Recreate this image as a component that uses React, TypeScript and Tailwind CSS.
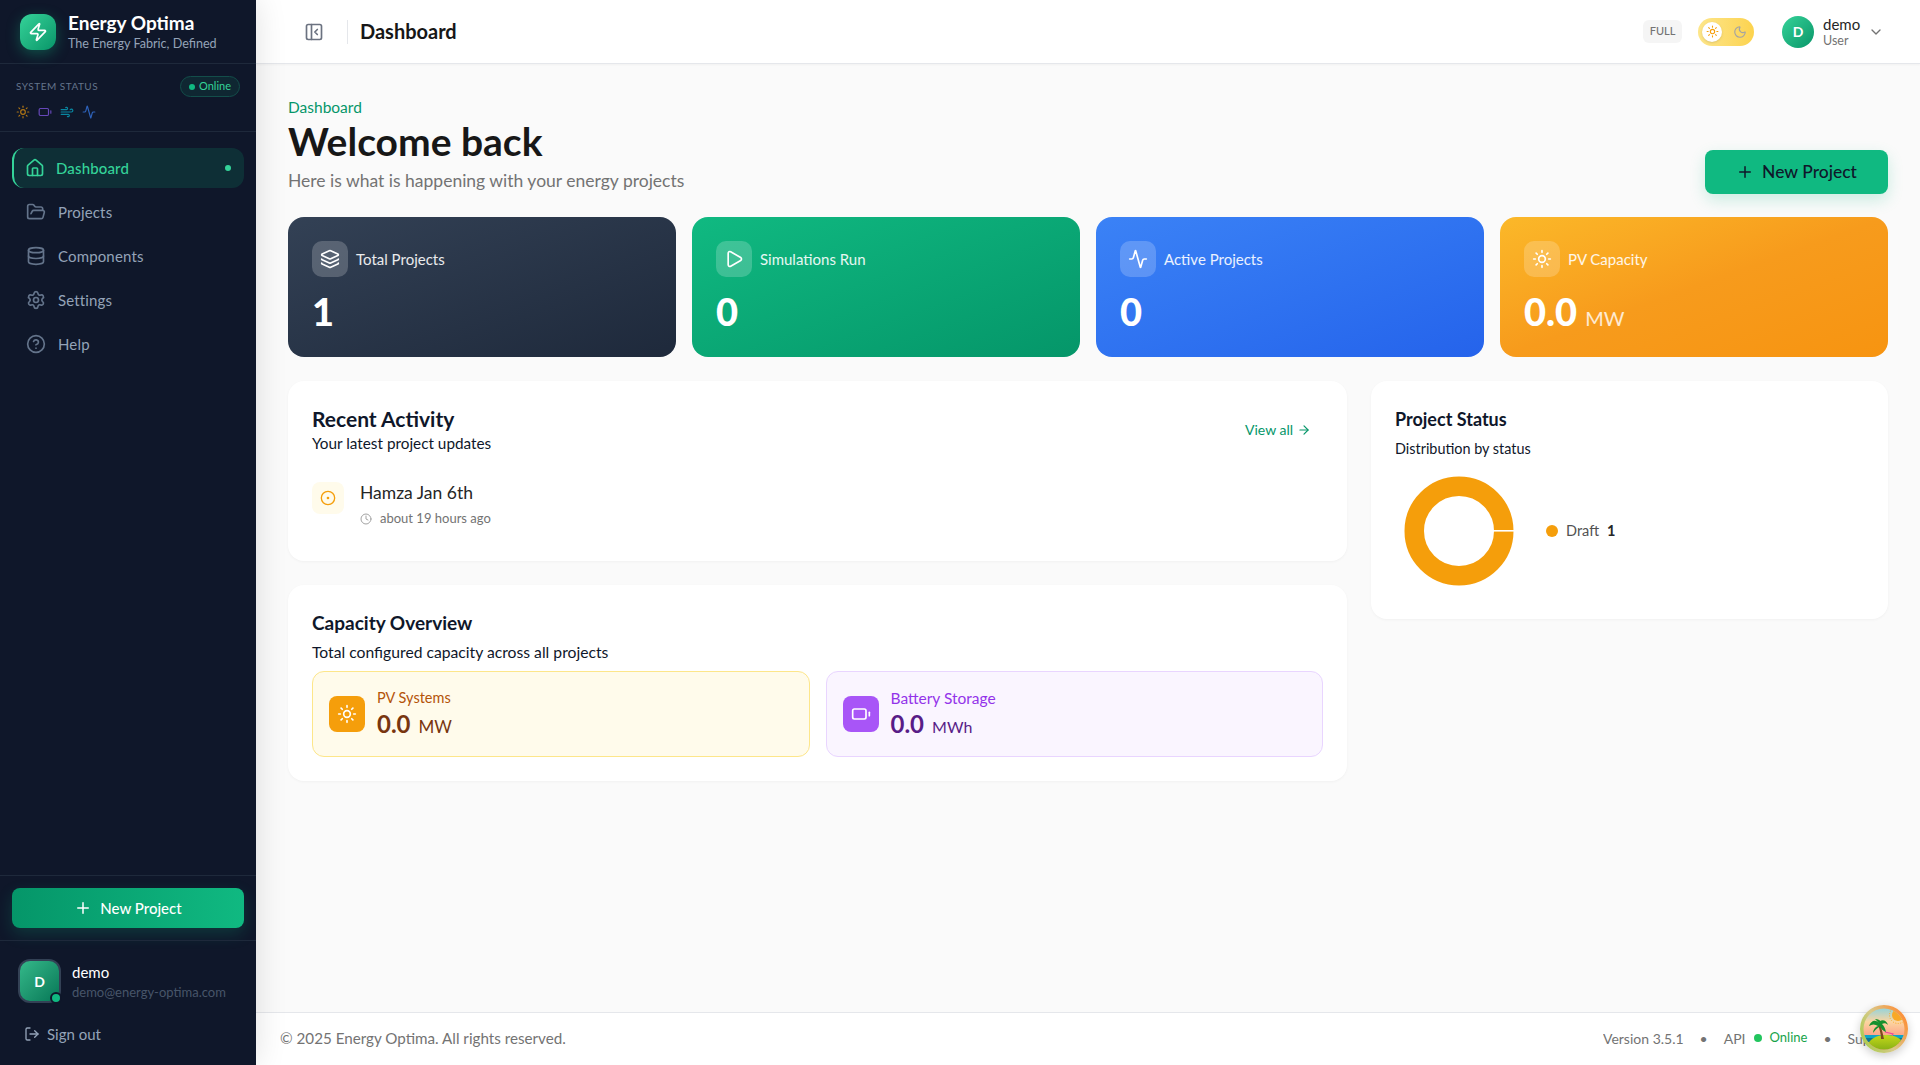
import {
  Activity,
  ArrowRight,
  Battery,
  CircleDot,
  CircleHelp,
  ChevronDown,
  Clock,
  Database,
  FolderOpen,
  House,
  Layers,
  LogOut,
  Moon,
  PanelLeftClose,
  Play,
  Plus,
  Settings,
  Sun,
  Wind,
  Zap,
} from "lucide-react";

const NAV = [
  { label: "Projects", icon: FolderOpen },
  { label: "Components", icon: Database },
  { label: "Settings", icon: Settings },
  { label: "Help", icon: CircleHelp },
];

function Sidebar() {
  return (
    <aside className="relative z-10 w-64 shrink-0 h-full flex flex-col bg-[#0f172a] shadow-[0_0_30px_rgba(0,0,0,0.12)]">
      {/* LOGO */}
      <div className="h-[64px] shrink-0 border-b border-[#1e293b] flex items-center gap-3 pl-5">
        <div className="w-9 h-9 rounded-xl bg-gradient-to-br from-[#34d399] to-[#059669] flex items-center justify-center shadow-[0_4px_14px_rgba(16,185,129,0.35)]">
          <Zap size={20} className="text-white" strokeWidth={2} />
        </div>
        <div>
          <div className="text-[19px] leading-[22px] font-bold text-white">Energy Optima</div>
          <div className="text-[12.6px] leading-4 text-[#94a3b8] mt-0.5">The Energy Fabric, Defined</div>
        </div>
      </div>

      {/* SYSTEM STATUS */}
      <div className="h-[68px] shrink-0 border-b border-[#1e293b] px-4 pt-3">
        <div className="flex items-center justify-between">
          <span className="text-[10px] tracking-[0.05em] text-[#64748b] uppercase">System Status</span>
          <span className="h-[21px] w-[60px] rounded-full border border-[#134e4a] bg-[#10b981]/10 flex items-center justify-center gap-1 text-[11px] text-[#34d399]">
            <span className="w-[6px] h-[6px] rounded-full bg-[#10b981]" />
            Online
          </span>
        </div>
        <div className="flex items-center gap-2 mt-2">
          <Sun size={14} className="text-[#f59e0b]/70" />
          <Battery size={14} className="text-[#8b5cf6]/70" />
          <Wind size={14} className="text-[#06b6d4]/70" />
          <Activity size={14} className="text-[#3b82f6]/70" />
        </div>
      </div>

      {/* NAV */}
      <nav className="flex-1 px-3 pt-[16px] flex flex-col gap-1">
        <a className="h-10 rounded-xl border-l-2 border-[#34d399] bg-[#10b981]/15 flex items-center pl-[11px] pr-[13px] text-[#34d399]">
          <House size={20} />
          <span className="ml-[11px] text-[15px] font-medium tracking-[0.01em]">Dashboard</span>
          <span className="ml-auto w-[6px] h-[6px] rounded-full bg-[#34d399]" />
        </a>
        {NAV.map((item) => (
          <a key={item.label} className="h-10 rounded-xl flex items-center pl-[14px] text-[#94a3b8]">
            <item.icon size={20} className="text-[#64748b]" />
            <span className="ml-[12px] text-[15px] tracking-[0.01em]">{item.label}</span>
          </a>
        ))}
      </nav>

      {/* NEW PROJECT */}
      <div className="h-[65px] shrink-0 border-t border-[#1e293b] px-3 pt-3">
        <button className="w-full h-10 rounded-lg bg-gradient-to-r from-[#059669] to-[#10b981] flex items-center justify-center gap-2 text-[15px] font-medium text-white shadow-[0_6px_16px_rgba(16,185,129,0.2)]">
          <Plus size={18} />
          New Project
        </button>
      </div>

      {/* USER */}
      <div className="border-t border-[#1e293b] flex-1 max-h-[125px] px-[18px] pt-[18px]">
        <div className="flex items-center gap-[11px]">
          <div className="relative w-[43px] h-[44px] rounded-xl border-2 border-[#334155] bg-gradient-to-br from-[#34b98a] to-[#047857] flex items-center justify-center text-[14px] font-bold text-white">
            D
            <span className="absolute -right-[3px] -bottom-[3px] w-[12px] h-[12px] rounded-full bg-[#10b981] border-2 border-[#0f172a]" />
          </div>
          <div>
            <div className="text-[15px] leading-5 text-white">demo</div>
            <div className="text-[13px] leading-4 mt-0.5 text-[#475569]">demo@energy-optima.com</div>
          </div>
        </div>
        <button className="flex items-center gap-[7px] mt-[20px] ml-[6px] text-[15px] text-[#94a3b8]">
          <LogOut size={16} />
          Sign out
        </button>
      </div>
    </aside>
  );
}

function Header() {
  return (
    <header className="relative h-16 shrink-0 bg-white border-b border-[#e5e7eb] shadow-[0_1px_2px_rgba(0,0,0,0.04)] flex items-center pl-[48px] pr-[36px]">
      <PanelLeftClose size={20} className="text-[#6b7280]" />
      <div className="w-px h-6 bg-[#e5e7eb] ml-[23px]" />
      <h1 className="ml-3 text-[20px] leading-6 font-bold text-[#171717] -mt-0.5">Dashboard</h1>

      <div className="ml-auto flex items-center">
        <span className="w-[39px] h-[23px] rounded-md bg-[#f5f5f5] flex items-center justify-center text-[11px] font-medium text-[#737373]">
          FULL
        </span>
        <div className="ml-4 w-[56px] h-[28px] rounded-full bg-gradient-to-r from-[#fde68a] to-[#fcd34d] flex items-center justify-between pl-1 pr-[7px]">
          <span className="w-5 h-5 rounded-full bg-white shadow flex items-center justify-center">
            <Sun size={13} className="text-[#f59e0b]" />
          </span>
          <Moon size={14} className="text-[#a3a3a3]" />
        </div>
        <div className="ml-7 w-8 h-8 rounded-full bg-gradient-to-br from-[#34d399] to-[#059669] flex items-center justify-center text-[14px] font-bold text-white">
          D
        </div>
        <div className="ml-[9px] w-[45px]">
          <div className="text-[15px] leading-[18px] text-[#262626]">demo</div>
          <div className="text-[12.5px] leading-4 text-[#737373]">User</div>
        </div>
        <ChevronDown size={16} className="text-[#737373]" />
      </div>
    </header>
  );
}

function StatCard({
  label,
  value,
  unit,
  icon: Icon,
  bg,
}: {
  label: string;
  value: string;
  unit?: string;
  icon: typeof Sun;
  bg: string;
}) {
  return (
    <div className={`h-[140px] rounded-2xl p-6 text-white ${bg}`}>
      <div className="flex items-center gap-2">
        <div className="w-9 h-9 rounded-[10px] bg-white/20 flex items-center justify-center">
          <Icon size={20} />
        </div>
        <span className="text-[15px] text-white/90">{label}</span>
      </div>
      <div className="flex items-baseline gap-2 mt-[14px]">
        <span className="text-[38px] leading-10 font-black">{value}</span>
        {unit && <span className="text-[20px] text-white/80">{unit}</span>}
      </div>
    </div>
  );
}

function Card({ className, children }: { className?: string; children: React.ReactNode }) {
  return (
    <div className={`bg-white rounded-2xl shadow-[0_1px_3px_rgba(0,0,0,0.04)] p-6 ${className ?? ""}`}>
      {children}
    </div>
  );
}

function CapacityBox({
  label,
  value,
  unit,
  icon: Icon,
  box,
  iconBg,
  labelColor,
  valueColor,
  labelSize,
  unitSize,
}: {
  label: string;
  value: string;
  unit: string;
  icon: typeof Sun;
  box: string;
  iconBg: string;
  labelColor: string;
  valueColor: string;
  labelSize: string;
  unitSize: string;
}) {
  return (
    <div className={`flex-1 h-[86px] rounded-xl border flex items-center gap-3 px-4 ${box}`}>
      <div className={`w-9 h-9 rounded-lg flex items-center justify-center text-white ${iconBg}`}>
        <Icon size={20} />
      </div>
      <div>
        <div className={`leading-5 ${labelSize} ${labelColor}`}>{label}</div>
        <div className={`flex items-baseline gap-2 ${valueColor}`}>
          <span className="text-[24px] leading-8 font-bold">{value}</span>
          <span className={unitSize}>{unit}</span>
        </div>
      </div>
    </div>
  );
}

function Donut() {
  return (
    <svg width="110" height="110" viewBox="0 0 110 110">
      <circle cx="55" cy="55" r="44.75" fill="none" stroke="#f59e0b" strokeWidth="19.5" />
      <rect x="89" y="54" width="21" height="1.6" fill="#ffffff" />
    </svg>
  );
}

function IslandBadge() {
  return (
    <div className="absolute right-[12px] bottom-[12px] w-12 h-12 rounded-full shadow-[0_3px_10px_rgba(0,0,0,0.2)]">
      <svg width="48" height="48" viewBox="0 0 48 48">
        <defs>
          <linearGradient id="ring" x1="0" y1="1" x2="1" y2="0.4">
            <stop offset="0" stopColor="#9ccc3c" />
            <stop offset="0.55" stopColor="#d8c98a" />
            <stop offset="1" stopColor="#fb923c" />
          </linearGradient>
          <linearGradient id="sky" x1="0" y1="0" x2="0" y2="1">
            <stop offset="0" stopColor="#7dd3e8" />
            <stop offset="0.35" stopColor="#fcd5a0" />
            <stop offset="0.7" stopColor="#fb9a83" />
          </linearGradient>
          <linearGradient id="land" x1="0" y1="0" x2="0" y2="1">
            <stop offset="0" stopColor="#c5d81a" />
            <stop offset="1" stopColor="#6b9e12" />
          </linearGradient>
          <clipPath id="inner">
            <circle cx="24" cy="24" r="20.5" />
          </clipPath>
        </defs>
        <circle cx="24" cy="24" r="24" fill="url(#ring)" />
        <g clipPath="url(#inner)">
          <rect width="48" height="48" fill="url(#sky)" />
          <circle cx="38" cy="10" r="6" fill="#f9a825" />
          <circle cx="38" cy="10" r="8.5" fill="none" stroke="#f9a825" strokeWidth="1" strokeDasharray="1 1.5" />
          <rect x="3" y="30" width="42" height="3" fill="#0ea5c6" />
          <rect x="3" y="33" width="42" height="4" fill="#0e7490" />
          <path d="M25 27 L33 29 L32 31" fill="none" stroke="#ec4899" strokeWidth="1.2" />
          <ellipse cx="26" cy="41" rx="18" ry="11" fill="url(#land)" />
          <g transform="translate(0 3)">
            <path d="M18 17 C20 22 21 27 21 31 L24 31 C23 27 22 21 20 16 Z" fill="#7c4a1e" />
            <path d="M19 15 C15 11 11 13 9 18 C12 16 15 16 18 18 C15 19 13 22 13 25 C16 21 18 20 20 18 C21 21 23 23 26 24 C25 20 24 18 22 16 C24 15 26 15 28 17 C27 13 23 11 20 13 C20 12 18 11 15 11 Z" fill="#16902e" />
          </g>
        </g>
      </svg>
    </div>
  );
}

export default function App() {
  return (
    <div className="relative h-screen flex overflow-hidden bg-[#fafafa] text-[#171717] [font-family:Lato,'Noto_Sans',sans-serif]">
      <Sidebar />

      <div className="flex-1 min-w-0 flex flex-col">
        <Header />

        <main className="flex-1 px-8 pt-[33px]">
          {/* PAGE TITLE */}
          <div className="flex items-end justify-between">
            <div>
              <div className="text-[15.5px] leading-5 text-[#059669]">Dashboard</div>
              <h2 className="text-[39px] leading-[48px] font-bold text-[#171717]">Welcome back</h2>
              <p className="text-[17.5px] leading-6 mt-1 text-[#737373]">Here is what is happening with your energy projects</p>
            </div>
            <button className="w-[183px] h-[44px] mb-[-1px] rounded-lg bg-[#10b981] flex items-center justify-center gap-2 text-[17.5px] font-medium text-[#0f172a] shadow-[0_6px_16px_rgba(16,185,129,0.2)]">
              <Plus size={18} />
              New Project
            </button>
          </div>

          {/* STATS */}
          <div className="grid grid-cols-4 gap-4 mt-6">
            <StatCard label="Total Projects" value="1" icon={Layers} bg="bg-gradient-to-br from-[#334155] to-[#1e293b]" />
            <StatCard label="Simulations Run" value="0" icon={Play} bg="bg-gradient-to-br from-[#10b981] to-[#059669]" />
            <StatCard label="Active Projects" value="0" icon={Activity} bg="bg-gradient-to-br from-[#3b82f6] to-[#2563eb]" />
            <StatCard label="PV Capacity" value="0.0" unit="MW" icon={Sun} bg="bg-gradient-to-br from-[#fbb829] via-[#f79b1c] to-[#f79410]" />
          </div>

          <div className="flex items-start gap-6 mt-6">
            {/* LEFT COLUMN */}
            <div className="w-[1059px] shrink-0 flex flex-col gap-6">
              <Card className="h-[180px]">
                <div className="flex items-start justify-between">
                  <div>
                    <h3 className="text-[21px] leading-7 font-bold text-[#0f172a]">Recent Activity</h3>
                    <p className="text-[15.3px] leading-5 text-[#0f172a]">Your latest project updates</p>
                  </div>
                  <a className="flex items-center gap-1 mt-[14px] mr-3 text-[14px] text-[#059669]">
                    View all
                    <ArrowRight size={14} />
                  </a>
                </div>
                <div className="flex gap-4 mt-[28px]">
                  <div className="w-8 h-8 mt-[1px] rounded-lg bg-[#fffbeb] flex items-center justify-center">
                    <CircleDot size={16} className="text-[#f59e0b]" />
                  </div>
                  <div>
                    <div className="text-[17.5px] leading-6 text-[#262626]">Hamza Jan 6th</div>
                    <div className="flex items-center gap-2 mt-1 text-[13px] text-[#737373]">
                      <Clock size={12} className="text-[#a3a3a3]" />
                      about 19 hours ago
                    </div>
                  </div>
                </div>
              </Card>

              <Card className="h-[196px]">
                <h3 className="text-[19px] leading-7 font-bold text-[#0f172a]">Capacity Overview</h3>
                <p className="text-[15.7px] leading-5 mt-[5px] text-[#0f172a]">Total configured capacity across all projects</p>
                <div className="flex gap-4 mt-[9px]">
                  <CapacityBox
                    label="PV Systems"
                    value="0.0"
                    unit="MW"
                    icon={Sun}
                    box="bg-[#fffbeb] border-[#fde68a]"
                    iconBg="bg-[#f59e0b]"
                    labelColor="text-[#b45309]"
                    valueColor="text-[#78350f]"
                    labelSize="text-[14.5px]"
                    unitSize="text-[17px]"
                  />
                  <CapacityBox
                    label="Battery Storage"
                    value="0.0"
                    unit="MWh"
                    icon={Battery}
                    box="bg-[#faf5ff] border-[#e9d5ff]"
                    iconBg="bg-[#a855f7]"
                    labelColor="text-[#9333ea]"
                    valueColor="text-[#581c87]"
                    labelSize="text-[15.5px]"
                    unitSize="text-[16px]"
                  />
                </div>
              </Card>
            </div>

            {/* RIGHT COLUMN */}
            <Card className="flex-1 h-[238px]">
              <h3 className="text-[18px] leading-7 font-bold text-[#0f172a]">Project Status</h3>
              <p className="text-[14.4px] leading-5 mt-[6px] text-[#0f172a]">Distribution by status</p>
              <div className="flex items-center mt-[17px] ml-[9px]">
                <Donut />
                <span className="ml-8 w-3 h-3 rounded-full bg-[#f59e0b]" />
                <span className="ml-2 text-[14.5px] text-[#525252]">Draft</span>
                <span className="ml-2 text-[14.5px] font-bold text-[#262626]">1</span>
              </div>
            </Card>
          </div>
        </main>

        {/* FOOTER */}
        <footer className="h-[53px] shrink-0 bg-white border-t border-[#e5e7eb] flex items-center justify-between pl-6 pb-0.5 text-[14px] text-[#737373]">
          <span className="text-[15.2px]">© 2025 Energy Optima. All rights reserved.</span>
          <div className="flex items-center w-[317px] overflow-hidden whitespace-nowrap">
            <span>Version 3.5.1</span>
            <span className="ml-4">•</span>
            <span className="ml-4">API</span>
            <span className="ml-2 w-2 h-2 rounded-full bg-[#22c55e]" />
            <span className="ml-2 text-[13px] text-[#16a34a]">Online</span>
            <span className="ml-4">•</span>
            <span className="ml-4">Support</span>
          </div>
        </footer>
      </div>

      <IslandBadge />
    </div>
  );
}
